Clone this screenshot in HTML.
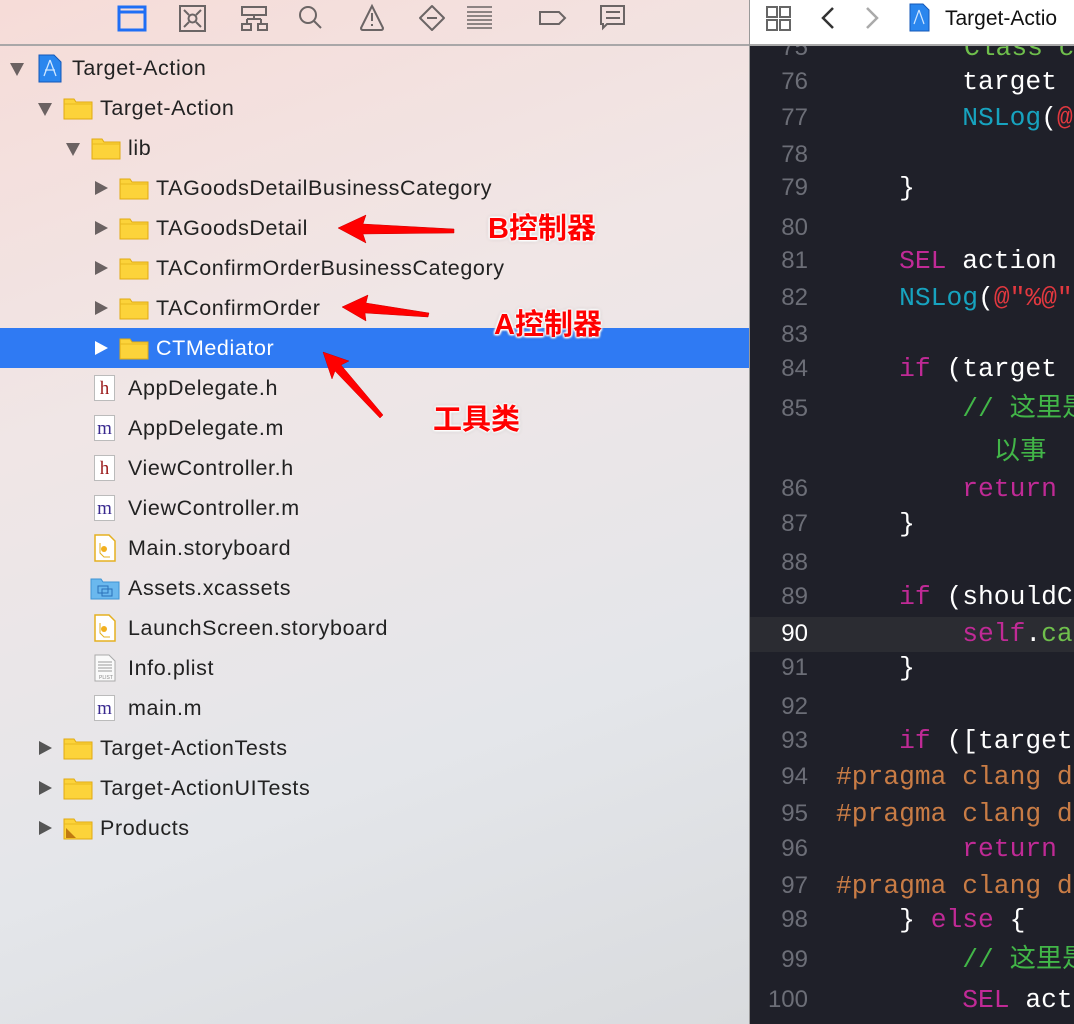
<!DOCTYPE html>
<html><head><meta charset="utf-8"><style>
*{margin:0;padding:0;box-sizing:border-box}
body{width:1074px;height:1024px;overflow:hidden;position:relative;font-family:"Liberation Sans","Noto Sans CJK SC",sans-serif}
#left{position:absolute;left:0;top:0;width:749px;height:1024px;background:linear-gradient(160deg,#f6dcd8 0%,#f0e6e6 35%,#e4e6ea 70%,#d9dbde 100%)}
#tb{position:absolute;left:0;top:0;width:749px;height:46px;border-bottom:2px solid #a9a7a8}
.row{position:absolute;left:0;width:749px;height:40px}
.t{position:absolute;font-size:21.5px;letter-spacing:0.6px;color:#222;line-height:40px;top:0;white-space:nowrap}
.sel{background:#2f7af3}
.sel .t{color:#fff}
.td{position:absolute;top:15px;width:0;height:0;border-left:7px solid transparent;border-right:7px solid transparent;border-top:13px solid #6b6262}
.tr{position:absolute;top:13px;width:0;height:0;border-top:7px solid transparent;border-bottom:7px solid transparent;border-left:13px solid #6b6262}
.sel .tr{border-left-color:#fff}
.fo{position:absolute;top:9px;width:30px;height:23px}
.fi{position:absolute;top:7px;width:21px;height:26px;background:#fff;border:1px solid #bbb;font-family:"Liberation Serif",serif;font-size:19px;text-align:center;line-height:26px}
#right{position:absolute;left:749px;top:0;width:325px;height:1024px;background:#1f2029;border-left:1px solid #999}
#hd{position:absolute;left:0;top:0;width:325px;height:46px;background:#fff;border-bottom:2px solid #a9a9a9}
.ln{position:absolute;left:0;width:58px;text-align:right;font-family:"Liberation Sans",sans-serif;font-size:24px;color:#6c6e77;height:36px;line-height:36px}
.cd{position:absolute;left:86px;font-family:"Liberation Mono","Noto Sans CJK SC",monospace;font-size:26.3px;color:#fff;height:36px;line-height:36px;white-space:pre}
.k{color:#c02a96}.c{color:#17a3bf}.s{color:#e2383f}.g{color:#42b648}.p{color:#c97c45}.m{color:#6fbf4c}
.ann{position:absolute;font-weight:bold;font-size:29px;color:#f00;text-shadow:0 0 2px #fff,0 0 2px #fff,1px 1px 2px #fff,-1px -1px 2px #fff,1px -1px 2px #fff,-1px 1px 2px #fff,0 0 4px rgba(0,0,0,.35)}
</style></head><body>
<div id="left">
<div id="tb">
<svg width="749" height="46" style="position:absolute;left:0;top:0" fill="none" stroke="#6b6565" stroke-width="2">
<rect x="119" y="7" width="26" height="23" stroke="#1e6ef5" stroke-width="3"/><line x1="119" y1="12" x2="145" y2="12" stroke="#1e6ef5" stroke-width="3"/>
<rect x="180" y="6" width="25" height="25"/><circle cx="192.5" cy="18.5" r="4"/><path d="M184 10l5 5M201 10l-5 5M184 27l5-5M201 27l-5-5"/>
<rect x="242" y="7" width="24" height="8"/><path d="M254 15v4M247 19h14M247 19v5M261 19v5"/><rect x="242" y="24" width="9" height="6"/><rect x="258" y="24" width="9" height="6"/>
<circle cx="308" cy="15" r="8"/><path d="M314 21l7 7"/>
<path d="M372 6l-11 22q0 2 2 2h18q2 0 2-2z"/><path d="M372 13v8M372 24v2"/>
<path d="M432 6l12 12-12 12-12-12z" stroke-linejoin="round"/><path d="M427 18h10"/>
<path d="M467 7h25M467 12h25M467 16h25M467 20h25M467 24h25M467 28h25" stroke-width="1.6"/>
<path d="M540 12h19l6 6-6 6h-19z"/>
<path d="M601 6h23v18h-17l-4 4v-4h-2z"/><path d="M606 12h14M606 18h14"/>
</svg>
</div>

<div class="row" style="top:48px"><div class="td" style="left:10px"></div>
<svg class="fo" style="left:38px;top:6px;width:24px;height:29px" viewBox="0 0 24 29"><path d="M1 1h15l7 7v20H1z" fill="#2a86ee" stroke="#1458b8"/><path d="M12 6l-6 16M12 6l6 16M7 16h10" stroke="#cfe6ff" stroke-width="1.3" fill="none"/></svg>
<div class="t" style="left:72px">Target-Action</div></div>

<div class="row" style="top:88px"><div class="td" style="left:38px"></div>
<svg class="fo" style="left:63px" viewBox="0 0 30 23"><path d="M1 2h10l2 3h16v17H1z" fill="#fcd33a" stroke="#e1aa12"/><path d="M1 7h28" stroke="#e8b820"/></svg>
<div class="t" style="left:100px">Target-Action</div></div>

<div class="row" style="top:128px"><div class="td" style="left:66px"></div>
<svg class="fo" style="left:91px" viewBox="0 0 30 23"><path d="M1 2h10l2 3h16v17H1z" fill="#fcd33a" stroke="#e1aa12"/><path d="M1 7h28" stroke="#e8b820"/></svg>
<div class="t" style="left:128px">lib</div></div>

<div class="row" style="top:168px"><div class="tr" style="left:95px"></div>
<svg class="fo" style="left:119px" viewBox="0 0 30 23"><path d="M1 2h10l2 3h16v17H1z" fill="#fcd33a" stroke="#e1aa12"/><path d="M1 7h28" stroke="#e8b820"/></svg>
<div class="t" style="left:156px">TAGoodsDetailBusinessCategory</div></div>

<div class="row" style="top:208px"><div class="tr" style="left:95px"></div>
<svg class="fo" style="left:119px" viewBox="0 0 30 23"><path d="M1 2h10l2 3h16v17H1z" fill="#fcd33a" stroke="#e1aa12"/><path d="M1 7h28" stroke="#e8b820"/></svg>
<div class="t" style="left:156px">TAGoodsDetail</div></div>

<div class="row" style="top:248px"><div class="tr" style="left:95px"></div>
<svg class="fo" style="left:119px" viewBox="0 0 30 23"><path d="M1 2h10l2 3h16v17H1z" fill="#fcd33a" stroke="#e1aa12"/><path d="M1 7h28" stroke="#e8b820"/></svg>
<div class="t" style="left:156px">TAConfirmOrderBusinessCategory</div></div>

<div class="row" style="top:288px"><div class="tr" style="left:95px"></div>
<svg class="fo" style="left:119px" viewBox="0 0 30 23"><path d="M1 2h10l2 3h16v17H1z" fill="#fcd33a" stroke="#e1aa12"/><path d="M1 7h28" stroke="#e8b820"/></svg>
<div class="t" style="left:156px">TAConfirmOrder</div></div>

<div class="row sel" style="top:328px"><div class="tr" style="left:95px"></div>
<svg class="fo" style="left:119px" viewBox="0 0 30 23"><path d="M1 2h10l2 3h16v17H1z" fill="#fcd33a" stroke="#e1aa12"/><path d="M1 7h28" stroke="#e8b820"/></svg>
<div class="t" style="left:156px">CTMediator</div></div>

<div class="row" style="top:368px"><div class="fi" style="left:94px;color:#9a1a1a">h</div><div class="t" style="left:128px">AppDelegate.h</div></div>
<div class="row" style="top:408px"><div class="fi" style="left:94px;color:#3a2a90">m</div><div class="t" style="left:128px">AppDelegate.m</div></div>
<div class="row" style="top:448px"><div class="fi" style="left:94px;color:#9a1a1a">h</div><div class="t" style="left:128px">ViewController.h</div></div>
<div class="row" style="top:488px"><div class="fi" style="left:94px;color:#3a2a90">m</div><div class="t" style="left:128px">ViewController.m</div></div>
<div class="row" style="top:528px"><svg class="fo" style="left:94px;top:6px;width:22px;height:28px" viewBox="0 0 22 28"><path d="M1 1h14l6 6v20H1z" fill="#fff" stroke="#e5b020" stroke-width="1.5"/><circle cx="10" cy="15" r="3" fill="#f2b01e"/><path d="M6 9v10l4 4h6" stroke="#e5b020" fill="none"/></svg><div class="t" style="left:128px">Main.storyboard</div></div>
<div class="row" style="top:568px"><svg class="fo" style="left:90px" viewBox="0 0 30 23"><path d="M1 2h10l2 3h16v17H1z" fill="#6ab8ee" stroke="#3e94d4"/><rect x="8" y="9" width="10" height="7" fill="none" stroke="#2a70b8"/><rect x="12" y="12" width="10" height="7" fill="none" stroke="#2a70b8"/></svg><div class="t" style="left:128px">Assets.xcassets</div></div>
<div class="row" style="top:608px"><svg class="fo" style="left:94px;top:6px;width:22px;height:28px" viewBox="0 0 22 28"><path d="M1 1h14l6 6v20H1z" fill="#fff" stroke="#e5b020" stroke-width="1.5"/><circle cx="10" cy="15" r="3" fill="#f2b01e"/><path d="M6 9v10l4 4h6" stroke="#e5b020" fill="none"/></svg><div class="t" style="left:128px">LaunchScreen.storyboard</div></div>
<div class="row" style="top:648px"><svg class="fo" style="left:94px;top:6px;width:22px;height:28px" viewBox="0 0 22 28"><path d="M1 1h14l6 6v20H1z" fill="#fafafa" stroke="#aaa"/><path d="M4 8h14M4 11h14M4 14h14M4 17h14" stroke="#999"/><text x="5" y="25" font-size="5" fill="#888" font-family="Liberation Sans">PLIST</text></svg><div class="t" style="left:128px">Info.plist</div></div>
<div class="row" style="top:688px"><div class="fi" style="left:94px;color:#3a2a90">m</div><div class="t" style="left:128px">main.m</div></div>

<div class="row" style="top:728px"><div class="tr" style="left:39px;border-left-color:#555"></div>
<svg class="fo" style="left:63px" viewBox="0 0 30 23"><path d="M1 2h10l2 3h16v17H1z" fill="#fcd33a" stroke="#e1aa12"/><path d="M1 7h28" stroke="#e8b820"/></svg>
<div class="t" style="left:100px">Target-ActionTests</div></div>
<div class="row" style="top:768px"><div class="tr" style="left:39px;border-left-color:#555"></div>
<svg class="fo" style="left:63px" viewBox="0 0 30 23"><path d="M1 2h10l2 3h16v17H1z" fill="#fcd33a" stroke="#e1aa12"/><path d="M1 7h28" stroke="#e8b820"/></svg>
<div class="t" style="left:100px">Target-ActionUITests</div></div>
<div class="row" style="top:808px"><div class="tr" style="left:39px;border-left-color:#555"></div>
<svg class="fo" style="left:63px" viewBox="0 0 30 23"><path d="M1 2h10l2 3h16v17H1z" fill="#fcd33a" stroke="#e1aa12"/><path d="M1 7h28" stroke="#e8b820"/><path d="M3 21v-10l10 10z" fill="#c07a10"/></svg>
<div class="t" style="left:100px">Products</div></div>

<svg width="749" height="1024" style="position:absolute;left:0;top:0">
<g fill="#f00" stroke="#c00" stroke-width="0.5">
<path d="M338 228l28-13-3 9 91 5 0 4-91 1 3 9z"/>
<path d="M342 307l26-12-2 8 63 10-1 4-63-4 1 8z"/>
<path d="M323 352l26 9-8 4 42 50-3 3-45-47-3 8z"/>
</g></svg>
<div class="ann" style="left:488px;top:205px">B控制器</div>
<div class="ann" style="left:494px;top:301px">A控制器</div>
<div class="ann" style="left:433px;top:396px">工具类</div>
</div>

<div id="right">
<div id="hd">
<svg width="325" height="46" style="position:absolute;left:0;top:0" fill="none" stroke="#666" stroke-width="2">
<rect x="17" y="7" width="10" height="10"/><rect x="30" y="7" width="10" height="10"/><rect x="17" y="20" width="10" height="10"/><rect x="30" y="20" width="10" height="10"/>
<path d="M83 8l-10 10 10 10" stroke="#333" stroke-width="2.5"/>
<path d="M117 8l10 10-10 10" stroke="#aaa" stroke-width="2.5"/>
<path d="M160 4h13l6 6v21h-19z" fill="#2a86ee" stroke="#1458b8" stroke-width="1"/><path d="M169 10l-5 14M169 10l5 14" stroke="#cfe6ff" stroke-width="1.2"/>
</svg>
<div style="position:absolute;left:195px;top:7px;font-size:21px;color:#111">Target-Actio</div>
</div>
<div class="cd m" style="top:30px;left:214px;clip-path:inset(16px 0 0 0)">Class c</div>
<div class="ln" style="top:30px;clip-path:inset(16px 0 0 0)">75</div>

<div class="ln" style="top:64px">76</div><div class="cd" style="top:64px">        target</div>
<div class="ln" style="top:100px">77</div><div class="cd" style="top:100px">        <span class="c">NSLog</span>(<span class="s">@</span></div>
<div class="ln" style="top:137px">78</div>
<div class="ln" style="top:170px">79</div><div class="cd" style="top:170px">    }</div>
<div class="ln" style="top:210px">80</div>
<div class="ln" style="top:243px">81</div><div class="cd" style="top:243px">    <span class="k">SEL</span> action</div>
<div class="ln" style="top:280px">82</div><div class="cd" style="top:280px">    <span class="c">NSLog</span>(<span class="s">@"%@"</span></div>
<div class="ln" style="top:317px">83</div>
<div class="ln" style="top:351px">84</div><div class="cd" style="top:351px">    <span class="k">if</span> (target</div>
<div class="ln" style="top:391px">85</div><div class="cd g" style="top:391px">        // 这里是</div>
<div class="cd g" style="top:434px">          以事</div>
<div class="ln" style="top:471px">86</div><div class="cd" style="top:471px">        <span class="k">return</span></div>
<div class="ln" style="top:506px">87</div><div class="cd" style="top:506px">    }</div>
<div class="ln" style="top:545px">88</div>
<div class="ln" style="top:579px">89</div><div class="cd" style="top:579px">    <span class="k">if</span> (shouldC</div>
<div style="position:absolute;left:0;top:617px;width:325px;height:35px;background:#2b2c32"></div>
<div class="ln" style="top:616px;color:#fff">90</div><div class="cd" style="top:616px">        <span class="k">self</span>.<span class="m">ca</span></div>
<div class="ln" style="top:650px">91</div><div class="cd" style="top:650px">    }</div>
<div class="ln" style="top:689px">92</div>
<div class="ln" style="top:723px">93</div><div class="cd" style="top:723px">    <span class="k">if</span> ([target</div>
<div class="ln" style="top:759px">94</div><div class="cd p" style="top:759px">#pragma clang d</div>
<div class="ln" style="top:796px">95</div><div class="cd p" style="top:796px">#pragma clang d</div>
<div class="ln" style="top:831px">96</div><div class="cd" style="top:831px">        <span class="k">return</span></div>
<div class="ln" style="top:868px">97</div><div class="cd p" style="top:868px">#pragma clang d</div>
<div class="ln" style="top:902px">98</div><div class="cd" style="top:902px">    } <span class="k">else</span> {</div>
<div class="ln" style="top:942px">99</div><div class="cd g" style="top:942px">        // 这里是</div>
<div class="ln" style="top:982px">100</div><div class="cd" style="top:982px">        <span class="k">SEL</span> act</div>
</div>
</body></html>
